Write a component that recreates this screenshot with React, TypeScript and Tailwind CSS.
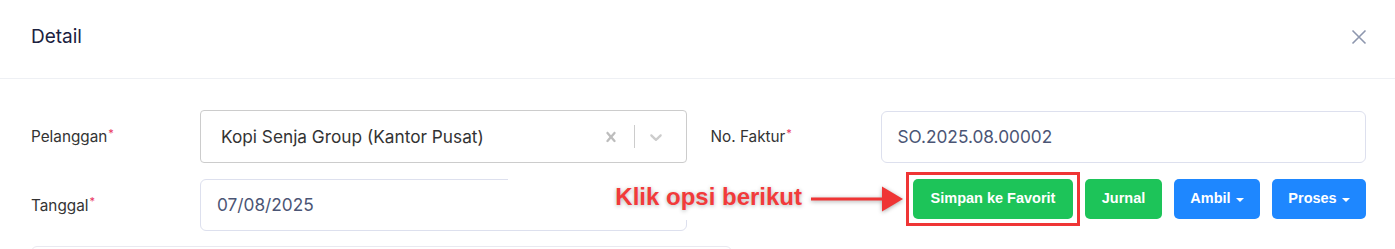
import React from 'react';

function Req({ children }: { children: React.ReactNode }) {
  return (
    <span className="text-[15.3px] text-[#333333]">
      {children}
      <sup className="ml-[1px] text-[11px] text-[#e8335f]">*</sup>
    </span>
  );
}

function ClearIcon() {
  return (
    <svg viewBox="0 0 20 20" className="h-5 w-5 fill-[#bdbdbd]">
      <path d="M14.348 14.849c-0.469 0.469-1.229 0.469-1.697 0l-2.651-3.030-2.651 3.029c-0.469 0.469-1.229 0.469-1.697 0-0.469-0.469-0.469-1.229 0-1.697l2.758-3.15-2.759-3.152c-0.469-0.469-0.469-1.228 0-1.697s1.228-0.469 1.697 0l2.652 3.031 2.651-3.031c0.469-0.469 1.228-0.469 1.697 0s0.469 1.229 0 1.697l-2.758 3.152 2.758 3.15c0.469 0.469 0.469 1.229 0 1.698z" />
    </svg>
  );
}

function ChevronIcon() {
  return (
    <svg viewBox="0 0 20 20" className="h-5 w-5 fill-[#cccccc]">
      <path d="M4.516 7.548c0.436-0.446 1.043-0.481 1.576 0l3.908 3.747 3.908-3.747c0.533-0.481 1.141-0.446 1.574 0 0.436 0.445 0.408 1.197 0 1.615-0.406 0.418-4.695 4.502-4.695 4.502-0.217 0.223-0.502 0.335-0.787 0.335s-0.57-0.112-0.789-0.335c0 0-4.287-4.084-4.695-4.502s-0.436-1.17 0-1.615z" />
    </svg>
  );
}

function Caret() {
  return <span className="ml-[5px] mt-[2px] inline-block border-x-[4px] border-t-[4px] border-x-transparent border-t-white" />;
}

export default function App() {
  return (
    <div className="relative h-[249px] w-[1395px] overflow-hidden bg-white font-['Inter','Noto_Sans',sans-serif]">
      {/* header */}
      <div className="flex h-[79px] items-center justify-between border-b border-[#eef0f4] pl-[31px] pr-[28px]">
        <h2 className="-mt-[6px] text-[19px] font-normal leading-none text-[#1b2140]">Detail</h2>
        <button className="-mt-[5px] text-[#8e97ae]">
          <svg viewBox="0 0 16 16" className="h-[16px] w-[16px]" fill="none" stroke="currentColor" strokeWidth="1.6">
            <path d="M1.5 1.5l13 13M14.5 1.5l-13 13" />
          </svg>
        </button>
      </div>

      <div className="pl-[31px] pr-[29px] pt-[31px]">
        {/* row 1 */}
        <div className="grid grid-cols-2 gap-x-6">
          <div className="flex items-center">
            <div className="w-[169px] shrink-0">
              <Req>Pelanggan</Req>
            </div>
            <div className="flex h-[53px] flex-1 items-center rounded-[4px] border border-[#cccccc] pl-[20px] pr-[20px]">
              <span className="flex-1 text-[17.25px] text-[#333333]">Kopi Senja Group (Kantor Pusat)</span>
              <ClearIcon />
              <span className="ml-[13px] h-[23px] w-px bg-[#cccccc]" />
              <span className="ml-[11px]">
                <ChevronIcon />
              </span>
            </div>
          </div>
          <div className="flex items-center">
            <div className="w-[170px] shrink-0">
              <Req>No. Faktur</Req>
            </div>
            <div className="flex h-[52px] flex-1 items-center rounded-[6px] border border-[#dde0ee] px-4 text-[17.25px] text-[#4b5575]">
              SO.2025.08.00002
            </div>
          </div>
        </div>

        {/* row 2 */}
        <div className="mt-[16px] grid grid-cols-2 gap-x-6">
          <div className="flex items-center">
            <div className="w-[169px] shrink-0">
              <Req>Tanggal</Req>
            </div>
            <div className="flex h-[52px] flex-1 items-center rounded-[6px] border border-[#dde0ee] px-4 text-[17.25px] text-[#4b5575]">
              07/08/2025
            </div>
          </div>
          <div className="flex items-start justify-end gap-3 font-['Liberation_Sans',sans-serif] text-[14.5px] font-bold text-white">
            <div className="relative">
              <button className="flex h-[40px] w-[160px] items-center justify-center rounded-[5px] bg-[#1dc459]">
                Simpan ke Favorit
              </button>
              <div className="pointer-events-none absolute -inset-[7px] border-[3px] border-[#ef3535]" />
            </div>
            <button className="flex h-[40px] w-[77px] items-center justify-center rounded-[5px] bg-[#1dc459]">
              Jurnal
            </button>
            <button className="flex h-[40px] w-[86px] items-center justify-center rounded-[5px] bg-[#1e87ff]">
              Ambil
              <Caret />
            </button>
            <button className="flex h-[40px] w-[94px] items-center justify-center rounded-[5px] bg-[#1e87ff]">
              Proses
              <Caret />
            </button>
          </div>
        </div>

        {/* next field, cut off */}
        <div className="mt-[15px] h-10 w-[701px] rounded-t-[6px] border border-[#e9e9f0]" />
      </div>

      {/* annotation overlay */}
      <div className="absolute left-[508px] top-[174px] flex h-[46px] w-[397px] items-center justify-end bg-white pr-[2px]">
        <span className="font-['Liberation_Sans',sans-serif] text-[24px] font-bold text-[#f23a3a] [text-shadow:0_1px_4px_rgba(0,0,0,0.3)]">
          Klik opsi berikut
        </span>
        <svg width="92" height="26" viewBox="0 0 92 26" className="ml-[9px] mt-[3px] drop-shadow-[0_1px_2px_rgba(0,0,0,0.35)]">
          <rect x="0" y="11.5" width="74" height="3" fill="#ef3535" />
          <path d="M71 0.5L92 13L71 25.5z" fill="#ef3535" />
        </svg>
      </div>
    </div>
  );
}
